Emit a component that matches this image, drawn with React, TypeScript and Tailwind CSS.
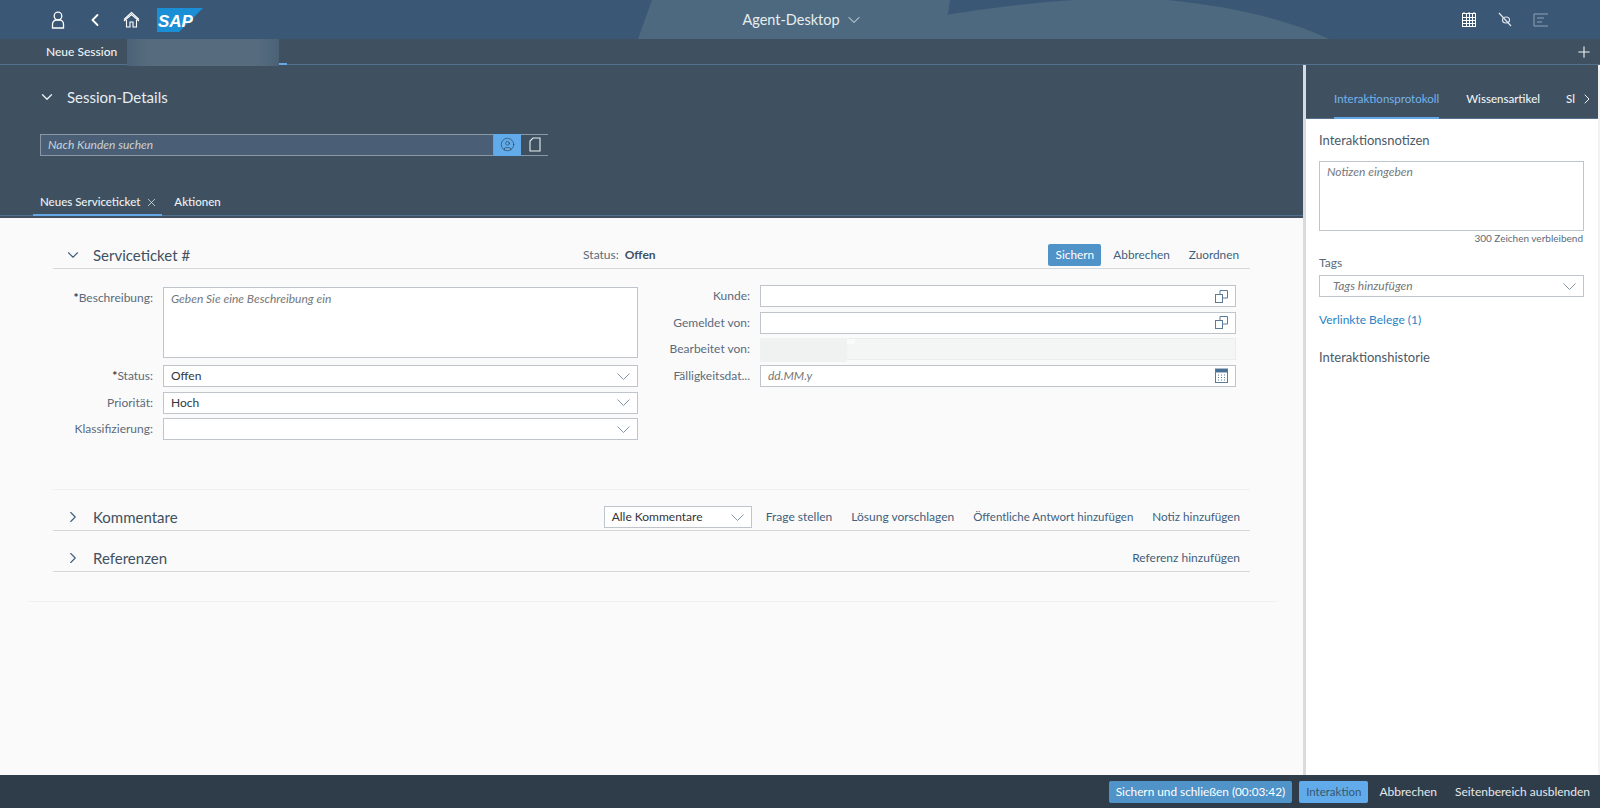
import React from "react";
import { ChevronDown, ChevronRight, ChevronLeft, Plus, X, CircleUser } from "lucide-react";

const FONT = "font-['Lato','Noto_Sans',sans-serif]";

function CopyIcon() {
  return (
    <svg width="13" height="13" viewBox="0 0 13 13" fill="none" stroke="#5b7a96" strokeWidth="1">
      <rect x="0.5" y="4.5" width="7" height="8" />
      <path d="M5 4.5V0.5H12.5V8H7.5" />
    </svg>
  );
}

function CalendarIcon() {
  return (
    <svg width="13" height="15" viewBox="0 0 13 15" fill="none" stroke="#5b7a96" strokeWidth="1">
      <rect x="0.5" y="1.5" width="12" height="13" />
      <rect x="0.5" y="1" width="12" height="3" fill="#3f6d96" />
      <path d="M3 7h1M6 7h1M9 7h1M3 9.5h1M6 9.5h1M9 9.5h1M3 12h1M6 12h1M9 12h1" />
    </svg>
  );
}

function SapLogo() {
  return (
    <svg width="46" height="24" viewBox="0 0 46 24">
      <polygon points="0,0 46,0 22,24 0,24" fill="#1b8fd6" />
      <text x="1" y="18.5" fill="#fff" fontSize="17" fontWeight="900" fontStyle="italic" fontFamily="Liberation Sans">SAP</text>
    </svg>
  );
}

function DropChevron() {
  return (
    <svg width="13" height="7" viewBox="0 0 13 7" fill="none" stroke="#8497a8" strokeWidth="1">
      <path d="M0.5 0.5l6 6 6-6" />
    </svg>
  );
}

function Row({ label, req, children }: { label: string; req?: boolean; children: React.ReactNode }) {
  return (
    <div className="flex items-start">
      <div className="w-[100px] shrink-0 text-right text-[12px] leading-[22px] text-[#5b6b7a] whitespace-nowrap">
        {req && <span className="text-[#32363a] font-bold">*</span>}{label}
      </div>
      <div className="ml-[10px] flex-1">{children}</div>
    </div>
  );
}

function Field({ text, icon, muted }: { text?: string; icon?: React.ReactNode; muted?: boolean }) {
  return (
    <div className="h-[22px] bg-white border border-[#bfc5ca] flex items-center justify-between pl-[7px] pr-[7px] text-[12px]">
      <span className={muted ? "italic text-[#74777a]" : "text-[#32363a]"}>{text}</span>
      {icon}
    </div>
  );
}

const chevron = <DropChevron />;

export default function App() {
  return (
    <div className={`${FONT} w-[1600px] h-[808px] flex flex-col overflow-hidden bg-[#fafafa]`}>
      {/* shell */}
      <div className="relative h-[39px] shrink-0 bg-[#3a5875] flex items-center text-white">
        <svg className="absolute inset-0" width="1600" height="39" viewBox="0 0 1600 39">
          <path d="M652 0H950L944 39H638Z" fill="#4d697f" />
          <path d="M841 39C900 22 980 6 1075 0H1167C1230 6 1290 20 1329 39Z" fill="#4d697f" />
        </svg>
        <div className="relative flex items-center pl-[49px] gap-[18px]">
          <svg width="18" height="18" viewBox="0 0 18 18" fill="none" stroke="#fff" strokeWidth="1.3">
            <circle cx="9" cy="5" r="3.8" />
            <path d="M3.5 17V13a4 4 0 0 1 4-4h3a4 4 0 0 1 4 4v4z" />
          </svg>
          <ChevronLeft size={20} strokeWidth={2.2} />
          <svg width="17" height="17" viewBox="0 0 17 17" fill="none" stroke="#fff" strokeWidth="1.1">
            <path d="M1 8.5L8.5 1.5 16 8.5" />
            <path d="M1 10L8.5 3.5 16 10" />
            <path d="M3.5 9v7h3.5v-5h3v5h3.5V9" />
          </svg>
        </div>
        <div className="relative ml-[17px]"><SapLogo /></div>
        <div className="relative flex-1 flex justify-center items-center gap-[4px] text-[14.5px] text-[#e8edf1] pr-[58px]">
          Agent-Desktop <ChevronDown size={20} strokeWidth={1.2} />
        </div>
        <div className="relative flex items-center gap-[21px] pr-[51px]">
          <svg width="16" height="16" viewBox="0 0 16 16" fill="none" stroke="#fff" strokeWidth="1">
            <rect x="1.5" y="1.5" width="13" height="13" />
            <path d="M1.5 5.5h13M1.5 8.5h13M1.5 11.5h13M5.5 1.5v13M8.5 1.5v13M11.5 1.5v13M3 0v2M8 0v2M13 0v2" />
          </svg>
          <svg width="14" height="15" viewBox="0 0 14 15" fill="none" stroke="#dfe6ec" strokeWidth="1.2">
            <path d="M1 1l12 13" />
            <ellipse cx="8" cy="8" rx="3.5" ry="3" />
          </svg>
          <svg width="16" height="14" viewBox="0 0 16 14" fill="none" stroke="#8ea2b3" strokeWidth="1">
            <path d="M1 1h14M1 1v12h14M4 5h7M4 9h5" />
          </svg>
        </div>
      </div>

      {/* session tabs */}
      <div className="relative h-[26px] shrink-0 bg-[#3f5161] border-b border-[#53718c] flex items-center text-[12px] text-[#eef1f3]">
        <div className="pl-[46px] w-[127px] font-medium">Neue Session</div>
        <div className="h-[27px] w-[152px] bg-[linear-gradient(90deg,#4b6176_0%,#566c7e_14%,#566c7e_86%,#4b6176_100%)] self-start" />
        <div className="h-[26px] w-[8px] self-start border-b-2 border-[#64a8e6]" />
        <Plus size={18} strokeWidth={1.5} className="ml-auto mr-[7px]" />
      </div>

      <div className="flex-1 flex min-h-0">
        {/* left pane */}
        <div className="w-[1303px] shrink-0 flex flex-col">
          <div className="h-[153px] shrink-0 bg-[#3f5161] pb-[2px] flex flex-col">
            <div className="flex items-center pl-[38px] mt-[21px] text-[#e8edf1] text-[15px] gap-[11px]">
              <ChevronDown size={18} strokeWidth={1.8} />
              <span>Session-Details</span>
            </div>
            <div className="flex ml-[40px] mt-[25px] h-[22px] w-[508px]">
              <div className="flex-1 bg-[#4a5f75] border border-[#8a98a5] flex items-center pl-[7px] text-[12px] italic text-[#c9d1d8]">Nach Kunden suchen</div>
              <div className="w-[27px] bg-[#62abeb] flex items-center justify-center">
                <CircleUser size={15} strokeWidth={1} color="#2a3d4e" />
              </div>
              <div className="w-[27px] border-y border-[#8a98a5] flex items-center justify-center">
                <svg width="12" height="15" viewBox="0 0 12 15" fill="none" stroke="#e8edf1" strokeWidth="1.1">
                  <path d="M4 1h7v13H1V4z" />
                </svg>
              </div>
            </div>
            <div className="mt-auto flex items-end pl-[33px] text-[11.5px] text-[#eef1f3] font-medium border-b border-[#53718c]">
              <div className="flex items-center gap-[5px] pl-[7px] pr-[4px] h-[26px] border-b-2 border-[#64a8e6] -mb-px">
                Neues Serviceticket <X size={13} strokeWidth={1.3} />
              </div>
              <div className="h-[26px] ml-[5px] flex items-center pl-[7px]">Aktionen</div>
            </div>
          </div>

          <div className="flex-1 min-h-0 bg-[#fafafa] pl-[28px] pr-[26px]">
            <div className="pl-[25px] pr-[27px]">
              <div className="h-[51px] flex items-end border-b border-[#d5d8da]">
                <div className="h-[26px] flex items-center w-full">
                  <ChevronDown size={18} strokeWidth={1.5} color="#3f5f7d" className="ml-[11px]" />
                  <span className="ml-[11px] text-[15px] text-[#3f5161]">Serviceticket #</span>
                  <span className="ml-[393px] text-[12px] text-[#5b6b7a]">Status:</span>
                  <span className="ml-[6px] text-[12px] font-bold text-[#3f5161]">Offen</span>
                  <div className="ml-auto flex items-center gap-[19px] pr-[11px] text-[11.8px] text-[#3f5f7d]">
                    <div className="h-[22px] w-[53px] -mr-[7px] rounded-[2px] bg-[#4f93c9] text-white flex items-center justify-center">Sichern</div>
                    <span>Abbrechen</span>
                    <span>Zuordnen</span>
                  </div>
                </div>
              </div>

              <div className="grid grid-cols-[585px_1fr] h-[220px] pt-[18px] pr-[14px]">
                <div className="flex flex-col gap-[4.5px]">
                  <Row label="Beschreibung:" req>
                    <div className="h-[71px] bg-white border border-[#bfc5ca] px-[7px] py-[2px] text-[12px] italic text-[#74777a] mb-[2.5px]">Geben Sie eine Beschreibung ein</div>
                  </Row>
                  <Row label="Status:" req><Field text="Offen" icon={chevron} /></Row>
                  <Row label="Priorität:"><Field text="Hoch" icon={chevron} /></Row>
                  <Row label="Klassifizierung:"><Field icon={chevron} /></Row>
                </div>
                <div className="flex flex-col gap-[4.5px] -mt-[2px] pl-[12px]">
                  <Row label="Kunde:"><Field icon={<CopyIcon />} /></Row>
                  <Row label="Gemeldet von:"><Field icon={<CopyIcon />} /></Row>
                  <Row label="Bearbeitet von:">
                    <div className="h-[22px] bg-[#f4f5f5] border border-[#ebecec] flex">
                      <div className="h-[24px] w-[87px] bg-[#f0f1f1] -mt-px -ml-px" />
                      <div className="h-[5px] w-[8px] bg-[#fafafa]" />
                    </div>
                  </Row>
                  <Row label="Fälligkeitsdat...">
                    <Field text="dd.MM.y" muted icon={<CalendarIcon />} />
                  </Row>
                </div>
              </div>

              <div className="h-[42px] border-t border-[#f0f0f0] border-b border-b-[#d5d8da] flex items-end">
                <div className="h-[26px] w-full flex items-center">
                  <ChevronRight size={18} strokeWidth={1.5} color="#3f5f7d" className="ml-[11px]" />
                  <span className="ml-[11px] text-[15px] text-[#3f5161]">Kommentare</span>
                  <div className="ml-[426px] h-[22px] w-[148px] bg-white border border-[#bfc5ca] flex items-center justify-between pl-[7px] pr-[7px] text-[12px] text-[#32363a]">
                    Alle Kommentare {chevron}
                  </div>
                  <div className="ml-auto flex items-center gap-[19px] pr-[10px] text-[12px] text-[#3f5f7d] whitespace-nowrap">
                    <span>Frage stellen</span>
                    <span>Lösung vorschlagen</span>
                    <span className="text-[11.5px]">Öffentliche Antwort hinzufügen</span>
                    <span className="text-[11.7px]">Notiz hinzufügen</span>
                  </div>
                </div>
              </div>
              <div className="h-[41px] border-b border-[#d5d8da] flex items-end">
                <div className="h-[26px] w-full flex items-center">
                  <ChevronRight size={18} strokeWidth={1.5} color="#3f5f7d" className="ml-[11px]" />
                  <span className="ml-[11px] text-[15px] text-[#3f5161]">Referenzen</span>
                  <span className="ml-auto pr-[10px] text-[12px] text-[#3f5f7d]">Referenz hinzufügen</span>
                </div>
              </div>
            </div>
            <div className="mt-[29px] border-t border-[#f0f0f0]" />
          </div>
        </div>

        {/* side panel */}
        <div className="w-[3px] shrink-0 bg-[#d9dcde]" />
        <div className="flex-1 flex flex-col bg-white border-r-2 border-[#f2f2f2]">
          <div className="h-[54px] shrink-0 bg-[#3f5161] border-b border-[#53718c] flex items-end pl-[28px] text-[11.5px] text-[#eef1f3]">
            <div className="h-[38px] flex items-center border-b-2 border-[#64a8e6] text-[#74b3ea] -mb-px">Interaktionsprotokoll</div>
            <div className="h-[38px] flex items-center ml-[27px] font-medium">Wissensartikel</div>
            <div className="h-[38px] flex items-center ml-[26px] font-medium">Sl</div>
            <div className="h-[38px] flex items-center ml-[4px]"><ChevronRight size={16} strokeWidth={1.5} /></div>
          </div>
          <div className="px-[13px] pt-[12px] text-[#4a5a68]">
            <div className="text-[13px] leading-[18px]">Interaktionsnotizen</div>
            <div className="mt-[12px] h-[70px] w-[265px] border border-[#bfc5ca] bg-white px-[7px] py-[1px] text-[12px] italic text-[#74777a]">Notizen eingeben</div>
            <div className="w-[264px] text-right text-[10px] leading-[14px] text-[#5b6b7a]">300 Zeichen verbleibend</div>
            <div className="mt-[11px] text-[12px] text-[#5b6b7a] leading-[14px]">Tags</div>
            <div className="mt-[5px] h-[22px] w-[265px] border border-[#bfc5ca] flex items-center justify-between pl-[13px] pr-[7px] text-[12px] italic text-[#74777a]">
              Tags hinzufügen {chevron}
            </div>
            <div className="mt-[16px] text-[12px] text-[#2a83c4] leading-[14px]">Verlinkte Belege (1)</div>
            <div className="mt-[21px] text-[13px] leading-[18px]">Interaktionshistorie</div>
          </div>
        </div>
      </div>

      {/* footer */}
      <div className="h-[33px] shrink-0 bg-[#2f3c4a] flex items-center justify-end gap-[7px] pr-[10px] text-[12px] text-[#e5e9ec]">
        <div className="h-[22px] px-[7px] rounded-[2px] bg-[#4f93c9] flex items-center text-white text-[11.8px]">Sichern und schließen (00:03:42)</div>
        <div className="h-[22px] px-[7px] rounded-[2px] bg-[#62abeb] flex items-center text-[#35576f] text-[11.5px]">Interaktion</div>
        <span className="ml-[4px]">Abbrechen</span>
        <span className="ml-[11px]">Seitenbereich ausblenden</span>
      </div>
    </div>
  );
}
